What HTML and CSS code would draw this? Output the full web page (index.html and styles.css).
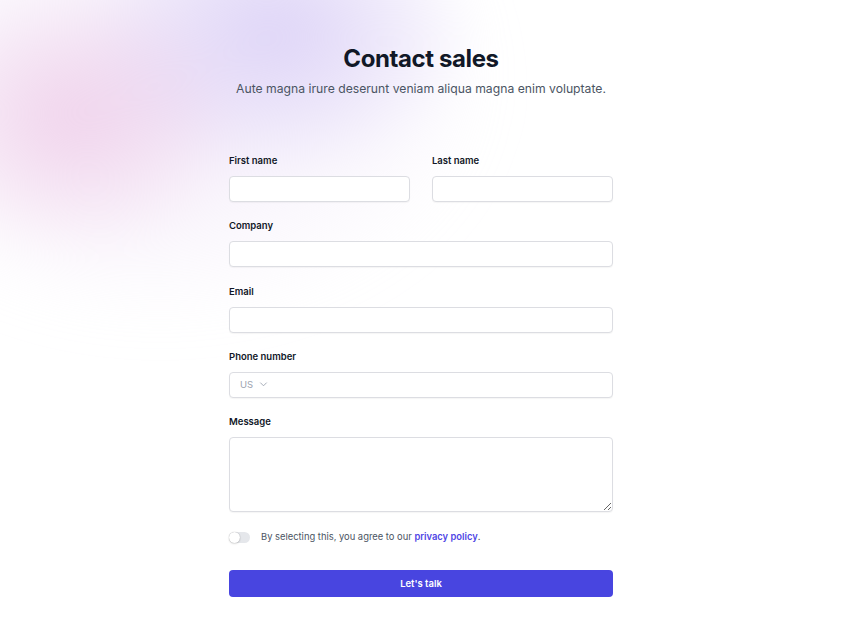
FILE: index.html
```html
<!DOCTYPE html>
<html>
<head>
<meta charset="utf-8">
<link rel="stylesheet" href="styles.css">
</head>
<body>
<div class="bg" aria-hidden="true"></div>
<main class="page">
  <header class="head">
    <h1 class="title">Contact sales</h1>
    <p class="lead">Aute magna irure deserunt veniam aliqua magna enim voluptate.</p>
  </header>
  <form class="form">
    <div class="grid">
      <div class="field">
        <label class="label">First name</label>
        <input class="input" type="text">
      </div>
      <div class="field">
        <label class="label">Last name</label>
        <input class="input" type="text">
      </div>
      <div class="field full">
        <label class="label">Company</label>
        <input class="input" type="text">
      </div>
      <div class="field full">
        <label class="label">Email</label>
        <input class="input" type="email">
      </div>
      <div class="field full">
        <label class="label">Phone number</label>
        <div class="input phone">
          <span class="country">US</span>
          <svg class="chev" viewBox="0 0 20 20" width="13" height="13"><path d="M5.5 7.5 10 12l4.5-4.5" fill="none" stroke="#9ca3af" stroke-width="1.4" stroke-linecap="round" stroke-linejoin="round"/></svg>
        </div>
      </div>
      <div class="field full">
        <label class="label">Message</label>
        <textarea class="input area"></textarea>
      </div>
    </div>
    <div class="agree">
      <span class="switch"><span class="knob"></span></span>
      <span class="agree-text">By selecting this, you agree to our <a class="link" href="#">privacy policy</a>.</span>
    </div>
    <button class="btn" type="button">Let's talk</button>
  </form>
</main>
</body>
</html>
```
FILE: styles.css
```css
* { box-sizing: border-box; }
html, body { margin: 0; padding: 0; background: #fff; }
body {
  font-family: Inter, "Noto Sans", sans-serif;
  color: #111827;
  min-height: 627px;
  position: relative;
  overflow: hidden;
}
.bg {
  position: absolute;
  left: -160px;
  top: -180px;
  width: 700px;
  height: 540px;
  background:
    radial-gradient(ellipse 170px 140px at 230px 300px, rgba(236, 190, 225, 0.6), rgba(236, 190, 225, 0) 100%),
    radial-gradient(ellipse 200px 150px at 440px 210px, rgba(210, 198, 245, 0.7), rgba(210, 198, 245, 0) 100%),
    radial-gradient(ellipse 340px 240px at 320px 270px, rgba(236, 224, 246, 0.6), rgba(236, 224, 246, 0) 100%);
  filter: blur(24px);
  pointer-events: none;
}
.page {
  position: relative;
  padding: 44px 8px 0 0;
}
.head { text-align: center; }
.title {
  margin: 0;
  font-size: 24px;
  line-height: 30px;
  font-weight: 700;
  letter-spacing: -0.4px;
  color: #111827;
}
.lead {
  margin: 5px 0 0;
  font-size: 12.2px;
  line-height: 20px;
  color: #4b5563;
}
.form {
  width: 384px;
  margin: 53px auto 0;
}
.grid {
  display: grid;
  grid-template-columns: 1fr 1fr;
  column-gap: 22px;
  row-gap: 15.3px;
}
.field { display: flex; flex-direction: column; gap: 7px; }
.full { grid-column: 1 / -1; }
.label {
  font-size: 9.5px;
  line-height: 17px;
  font-weight: 600;
  color: #111827;
}
.input {
  display: block;
  width: 100%;
  height: 26px;
  border: 1px solid #dcdde2;
  border-radius: 4px;
  background: #fff;
  box-shadow: 0 1px 1px rgba(0, 0, 0, 0.04);
  font: inherit;
  margin: 0;
}
.phone {
  display: flex;
  align-items: center;
  gap: 4px;
  padding-left: 10px;
}
.country {
  font-size: 9.5px;
  color: #9ca3af;
}
.chev { display: block; }
.area {
  height: 75px;
  resize: vertical;
}
.agree {
  display: flex;
  align-items: center;
  gap: 11px;
  margin-top: 18px;
}
.switch {
  width: 21px;
  height: 11px;
  border-radius: 6px;
  background: #e5e7eb;
  position: relative;
  flex: none;
}
.knob {
  position: absolute;
  left: 0;
  top: 0;
  width: 11px;
  height: 11px;
  border-radius: 50%;
  background: #fff;
  box-shadow: 0 0 1px rgba(0,0,0,0.35), 0 1px 2px rgba(0,0,0,0.12);
}
.agree-text {
  font-size: 9.4px;
  line-height: 14px;
  color: #4b5563;
}
.link {
  color: #4f46e5;
  font-weight: 600;
  text-decoration: none;
}
.btn {
  display: block;
  width: 100%;
  height: 27px;
  margin-top: 26px;
  border: 0;
  border-radius: 4px;
  background: #4845e0;
  color: #fff;
  font-family: inherit;
  font-size: 9.5px;
  font-weight: 600;
}
```
